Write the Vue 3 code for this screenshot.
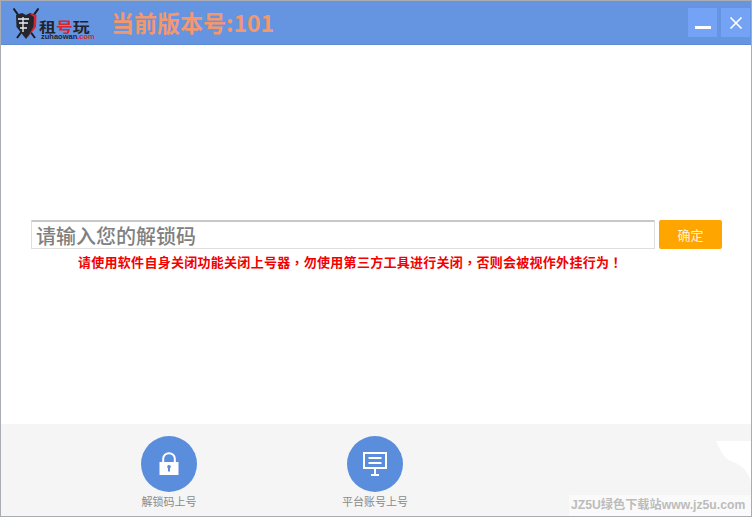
<template>
  <div class="window">
    <header class="titlebar">
      <div class="logo">
        <svg class="shield" width="26" height="32" viewBox="0 0 26 32">
          <path d="M0.500 0.500 L22 30 M25.500 0.500 L4 30" stroke="#1c1c22" stroke-width="2" fill="none"/>
          <path d="M3 7 L9 5 L13 7 L17 5 L23 7 L22.500 19 L13 31 L3.500 19 Z" fill="#25252b"/>
          <path d="M16 5.500 L23.500 7 L23 19 L15 29 L20.500 18.500 L21 9 Z" fill="#d8262f"/>
          <path d="M5 11 H16 M6 15 H15 M7 20 H14 M10 9 V24" stroke="#e9eef7" stroke-width="1.300" fill="none"/>
        </svg>
        <div class="brand">
          <div class="brand-name">租<span class="brand-red">号</span>玩</div>
          <div class="brand-url">zuhaowan<span class="brand-red">.com</span></div>
        </div>
      </div>
      <div class="version">当前版本号:101</div>
      <div class="controls">
        <button class="ctl"><span class="minus"></span></button>
        <button class="ctl">
          <svg width="14" height="14" viewBox="0 0 14 14"><path d="M1.500 1.500 L12.500 12.500 M12.500 1.500 L1.500 12.500" stroke="#fff" stroke-width="1.700" fill="none"/></svg>
        </button>
      </div>
    </header>

    <main class="main">
      <div class="form">
        <div class="input">请输入您的解锁码</div>
        <button class="ok">确定</button>
      </div>
      <p class="warn">请使用软件自身关闭功能关闭上号器<span class="punct">，</span>勿使用第三方工具进行关闭<span class="punct">，</span>否则会被视作外挂行为<span class="punct">！</span></p>
    </main>

    <footer class="footer">
      <svg class="corner" width="35" height="42" viewBox="0 0 35 42">
        <path d="M0 0 H35 V42 C33 32 27 24 17 21 C10 19 5 12 0 0 Z" fill="#fff"/>
      </svg>
      <div class="action first">
        <div class="circle">
          <svg class="lock" width="20" height="23" viewBox="0 0 20 23">
            <path d="M4.200 10 V6.500 a5.800 5.300 0 0 1 11.600 0 V10" fill="none" stroke="#fff" stroke-width="2"/>
            <path fill-rule="evenodd" d="M0.500 10 H19.500 V23 H0.500 Z M10 13 a1.800 1.800 0 0 0 -1 3.300 V19.500 H11 V16.300 A1.800 1.800 0 0 0 10 13 Z" fill="#fff"/>
          </svg>
        </div>
        <span class="label">解锁码上号</span>
      </div>
      <div class="action second">
        <div class="circle">
          <svg class="screen" width="24" height="24" viewBox="0 0 24 24">
            <rect x="1" y="1" width="22" height="15" fill="none" stroke="#fff" stroke-width="2"/>
            <path d="M5.500 6 H18.500 M5.500 11 H18.500" stroke="#fff" stroke-width="2"/>
            <path d="M12 16 V23 M8 23 H16" stroke="#fff" stroke-width="2"/>
          </svg>
        </div>
        <span class="label">平台账号上号</span>
      </div>
      <div class="watermark">JZ5U绿色下载站www.jz5u.com</div>
    </footer>
  </div>
</template>

<script setup>
</script>

<style>
html, body { margin: 0; padding: 0; background: #fff; }
</style>

<style scoped>
.window {
  width: 752px;
  height: 517px;
  box-sizing: border-box;
  border: 1px solid #a9adb3;
  display: flex;
  flex-direction: column;
  font-family: "Liberation Sans", "Noto Sans CJK SC", sans-serif;
  overflow: hidden;
  background: #fff;
}
.titlebar {
  height: 44px;
  flex: none;
  background: #6594e0;
  display: flex;
  align-items: center;
  padding: 0 1px 0 12px;
  border-bottom: 1px solid #5d8ad2;
  box-sizing: border-box;
}
.logo {
  display: flex;
  align-items: flex-start;
  width: 98px;
  flex: none;
  height: 32px;
  margin-top: 2px;
}
.shield { flex: none; }
.brand { padding-top: 11px; width: 52px; }
.brand-name {
  font: 700 13.500px/14px "Noto Sans CJK SC", sans-serif;
  color: #22232b;
  white-space: nowrap;
  transform: scaleX(1.25);
  transform-origin: left center;
}
.brand-url {
  font: 700 7.500px/7px "Liberation Sans", sans-serif;
  color: #22232b;
  white-space: nowrap;
  padding-left: 2px;
}
.brand-red { color: #d8262f; }
.version {
  font: 700 23px/30px "Noto Sans CJK SC", sans-serif;
  color: #f3986e;
  white-space: nowrap;
  flex: 1;
  margin-top: -2px;
}
.controls { display: flex; gap: 4px; align-self: flex-start; margin-top: 7px; }
.ctl {
  width: 29px;
  height: 29px;
  background: #74a3f5;
  border: 0;
  padding: 0;
  display: flex;
  align-items: center;
  justify-content: center;
}
.minus {
  display: block;
  width: 16px;
  height: 3px;
  background: #fff;
  margin-top: 10px;
}
.main {
  flex: 1;
  padding-top: 175px;
  box-sizing: border-box;
}
.form {
  display: flex;
  gap: 4px;
  padding-left: 30px;
  align-items: flex-start;
}
.input {
  width: 624px;
  height: 29px;
  box-sizing: border-box;
  border: 1px solid #dedede;
  border-top: 2px solid #c8c8c8;
  border-radius: 1px;
  padding-left: 4px;
  font: 500 20px/27px "Noto Sans CJK SC", sans-serif;
  color: #808080;
}
.ok {
  width: 63px;
  height: 29px;
  background: #ffa500;
  color: #fff3dc;
  border: 0;
  border-radius: 2px;
  padding: 0;
  font: 13px/29px "Noto Sans CJK SC", sans-serif;
}
.warn {
  margin: 4px 0 0 77px;
  font: 700 13px/18px "Noto Sans CJK SC", sans-serif;
  color: #f40000;
  letter-spacing: 0.28px;
  white-space: nowrap;
}
.punct { font-family: "Noto Sans CJK TC", sans-serif; }
.footer {
  position: relative;
  height: 92px;
  flex: none;
  background: #f5f5f5;
  display: flex;
  padding-left: 112px;
  box-sizing: border-box;
}
.corner { position: absolute; right: 0; top: 17px; }
.action {
  width: 112px;
  display: flex;
  flex-direction: column;
  align-items: center;
  padding-top: 12px;
}
.second { margin-left: 94px; }
.circle {
  width: 56px;
  height: 56px;
  border-radius: 50%;
  background: #5a8ddc;
  display: flex;
  align-items: center;
  justify-content: center;
}
.lock { margin-top: -2px; }
.label {
  font: 11px/16px "Noto Sans CJK SC", sans-serif;
  color: #8a8a8a;
  margin-top: 1px;
  white-space: nowrap;
}
.watermark {
  position: absolute;
  right: 0;
  bottom: 0;
  width: 182px;
  height: 21px;
  background: #fafafa;
  font: 700 12.200px/21px "Liberation Sans", "Noto Sans CJK SC", sans-serif;
  color: #bcbcbc;
  white-space: nowrap;
  padding-left: 2px;
  box-sizing: border-box;
}
</style>
